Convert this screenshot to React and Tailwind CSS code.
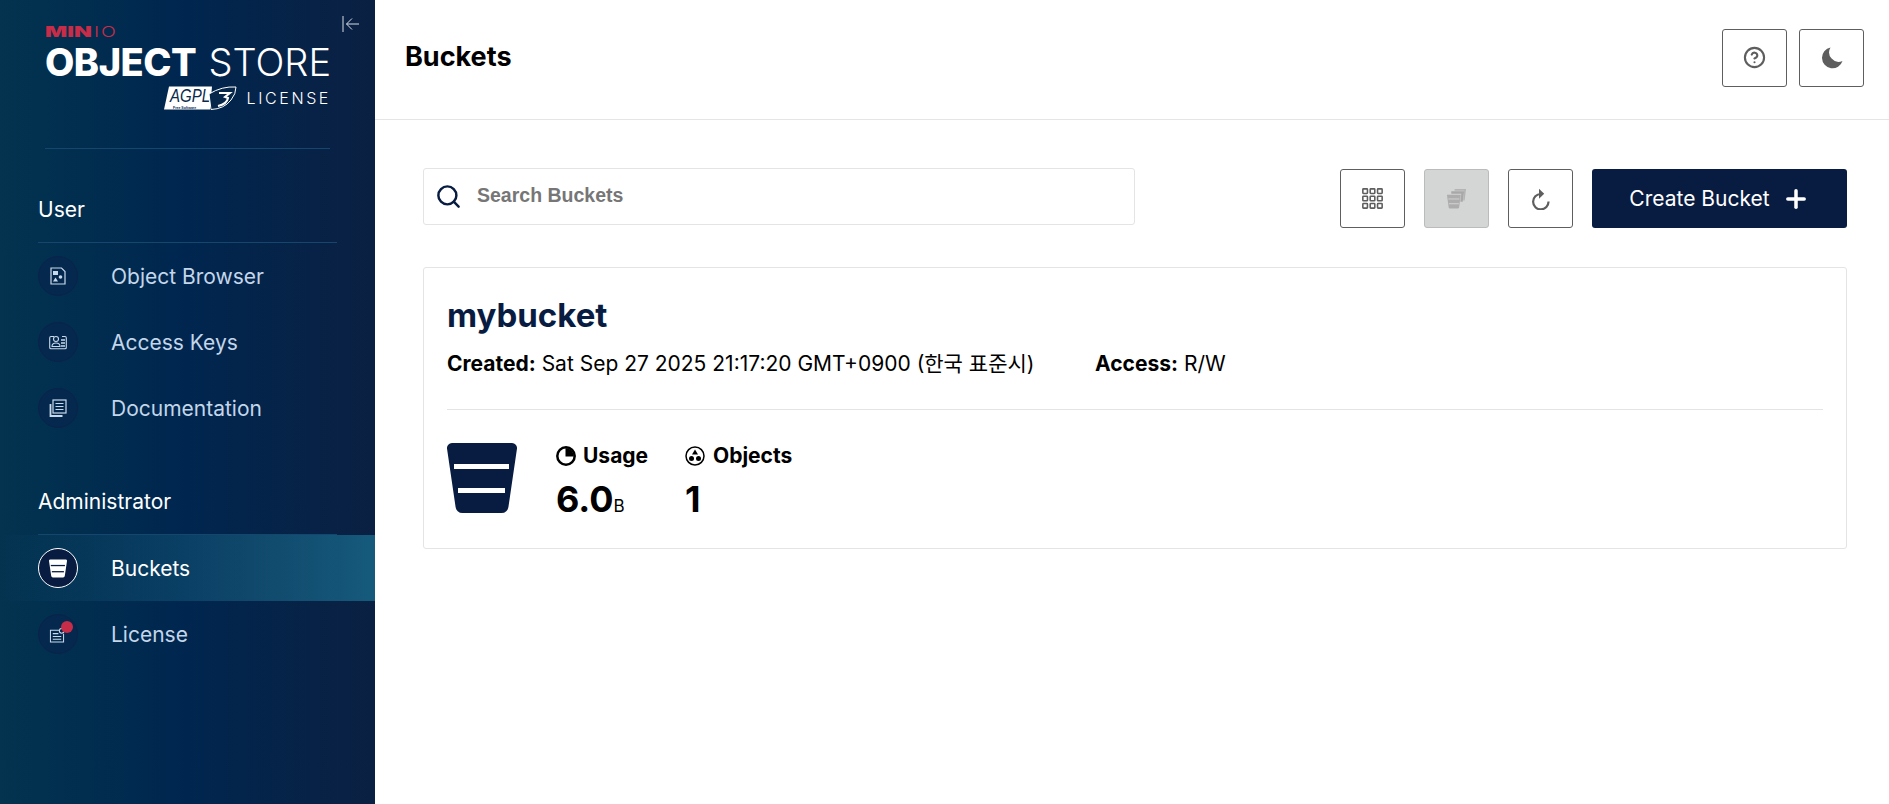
import React from 'react';
import { Search, CircleHelp, Plus } from 'lucide-react';

const BucketShape = ({ className, fill = '#081C42', lines = '#ffffff' }) => (
  <svg viewBox="0 0 70 70" className={className}>
    <path d="M5 0h60a5 5 0 0 1 5 5.500l-8.500 58a7 7 0 0 1-7 6.500h-39a7 7 0 0 1-7-6.500L0 5.500A5 5 0 0 1 5 0z" fill={fill} />
    <rect x="7" y="21" width="55" height="5" fill={lines} />
    <rect x="11" y="45" width="47" height="5" fill={lines} />
  </svg>
);

const ObjectBrowserIcon = () => (
  <svg viewBox="0 0 16 18" className="w-[16px] h-[18px]" fill="none">
    <path d="M1 1h10.500L15 4.500V17H1z" stroke="#c8d9ea" strokeWidth="1.200" />
    <rect x="3" y="4" width="5" height="4" fill="#c8d9ea" />
    <circle cx="10.500" cy="10" r="1.800" fill="#c8d9ea" />
    <path d="M5.500 10.500 8 14.500H3z" fill="#c8d9ea" />
  </svg>
);

const AccessKeysIcon = () => (
  <svg viewBox="0 0 18 15" className="w-[18px] h-[15px]" fill="none" stroke="#c8d9ea" strokeWidth="1.100">
    <path d="M5 1.500H2Q.7 1.500.7 3v9.500q0 1.300 1.300 1.300h14q1.300 0 1.300-1.300V3q0-1.500-1.300-1.500h-3" />
    <circle cx="7" cy="4" r="2.500" />
    <path d="M3 11.500q0-3.500 4-3.500t4 3.500z" />
    <path d="M12 5h4M12 8h4M12 11h4" strokeWidth="1.600" />
  </svg>
);

const DocumentationIcon = () => (
  <svg viewBox="0 0 18 18" className="w-[18px] h-[18px]" fill="none" stroke="#c8d9ea">
    <rect x="4" y="1" width="13" height="13" strokeWidth="1.200" />
    <path d="M6.500 4.500h8M6.500 7.500h8M6.500 10.500h8" strokeWidth="1.200" />
    <path d="M1.500 5v12h12" strokeWidth="1.800" />
  </svg>
);

const LicenseIcon = () => (
  <svg viewBox="0 0 16 16" className="w-[16px] h-[15px] mt-[3px] mr-[3px]" fill="none" stroke="#c8d9ea" strokeWidth="1.100">
    <path d="M11 2.500H1v12.500h14V6" />
    <path d="M3.500 6h6M3.500 9h9M3.500 12h9" strokeWidth="1.200" />
    <circle cx="13" cy="3" r="2.500" />
  </svg>
);

const GridIcon = () => (
  <svg viewBox="0 0 20 20" className="w-[21px] h-[21px]" fill="none" stroke="#5e5e5e" strokeWidth="1.500">
    {[0, 7, 14].map((y) =>
      [0, 7, 14].map((x) => <rect key={`${x}-${y}`} x={x + 0.800} y={y + 0.800} width="4.400" height="4.400" rx="0.600" />)
    )}
  </svg>
);

const MultiBucketIcon = () => (
  <svg viewBox="0 0 22 22" className="w-[21px] h-[21px]">
    <path d="M9 1h12l-1.500 12H18L19 3H9z" fill="#b4b4b4" />
    <path d="M5.500 3.500H19l-1.500 11H15l1-8.500H5.500z" fill="#a8a8a8" />
    <path d="M1 7h14.500l-1.800 13.500q-.2 1-1.200 1H4q-1 0-1.200-1z" fill="#adadad" />
    <path d="M2.500 11.500h11.500M3 16.500h10.500" stroke="#d4d5d5" strokeWidth="1" />
  </svg>
);

const RefreshIcon = () => (
  <svg viewBox="0 0 20 22" className="w-[20px] h-[22px]" fill="none" stroke="#5e5e5e">
    <path d="M17.500 13.500A7.700 7.700 0 1 1 9.800 6" strokeWidth="2.200" />
    <path d="M8 .8 13.200 5.800 8 10.800z" fill="#5e5e5e" stroke="none" />
  </svg>
);

const MoonIcon = () => (
  <svg viewBox="0 0 22 22" className="w-[22px] h-[22px]">
    <path d="M9.500.5a10.500 10.500 0 1 0 12 13.500A9.500 9.500 0 0 1 9.500.5z" fill="#5e5e5e" />
  </svg>
);

const UsageIcon = () => (
  <svg viewBox="0 0 20 20" className="w-[20px] h-[20px]" fill="none">
    <circle cx="10" cy="10" r="8.700" stroke="#000" strokeWidth="2.500" />
    <path d="M9.500 2v8.500H18a8.500 8.500 0 0 0-8.500-8.500z" fill="#000" />
  </svg>
);

const ObjectsIcon = () => (
  <svg viewBox="0 0 20 20" className="w-[20px] h-[20px]" fill="none">
    <circle cx="10" cy="10" r="9" stroke="#000" strokeWidth="1.500" />
    <path d="M10 3.500 13 8.500H7z" fill="#000" />
    <circle cx="6.500" cy="12.500" r="2.500" fill="#000" />
    <circle cx="13.500" cy="12.500" r="2.500" fill="#000" />
  </svg>
);

const Logo = () => (
  <div className="flex flex-col w-[286px]">
    <div className="flex items-center h-[12px] text-[15px] leading-none text-[#C72C48] whitespace-nowrap">
      <span className="inline-block w-[49px] font-black origin-left scale-x-[1.550]">MIN</span>
      <span className="inline-block font-light origin-left scale-x-[1.300] tracking-[1.500px]">IO</span>
    </div>
    <div className="mt-[11px] h-[28px] flex items-center justify-between text-white text-[38px] leading-none whitespace-nowrap">
      <span className="font-extrabold tracking-[-0.500px]">OBJECT</span>
      <span className="font-light">STORE</span>
    </div>
    <div className="mt-[10px] h-[24px] flex items-center justify-between pl-[119px]">
      <svg viewBox="0 0 73 24" className="w-[73px] h-[24px]">
        <path d="M5 .5h43l-2 23H0z" fill="#fff" />
        <text x="6" y="16" fontFamily="Liberation Sans, sans-serif" fontStyle="italic" fontWeight="400" fontSize="18" fill="#0a2a4c" textLength="40" lengthAdjust="spacingAndGlyphs">AGPL</text>
        <text x="9" y="22.500" fontFamily="Liberation Sans, sans-serif" fontWeight="700" fontSize="3.500" fill="#0a2a4c">Free Software</text>
        <path d="M45 8 47 23.500Q60 23 67 14 72 8 72 1 58 0 45 8z" fill="#06274a" stroke="#fff" strokeWidth="1" />
        <path d="M55 7h11l-5 4 3 1q-1 6-10 8" fill="none" stroke="#fff" strokeWidth="2" />
      </svg>
      <span className="text-white text-[16px] leading-none tracking-[2.600px] font-light">LICENSE</span>
    </div>
  </div>
);

const NavItem = ({ label, icon, active, badge }) => (
  <div
    className={`flex items-center h-[66px] pl-[38px] ${
      active ? 'bg-gradient-to-r from-transparent to-[#155a7c] text-white' : 'text-[#c3d6ea]'
    }`}
  >
    <div
      className={`relative flex items-center justify-center w-[40px] h-[40px] rounded-full border ${
        active ? 'bg-[#081C42] border-white' : 'bg-[#05284e] border-[#0a234a]'
      }`}
    >
      {icon}
      {badge && <span className="absolute top-[6px] right-[4px] w-[12px] h-[12px] rounded-full bg-[#C72C48]" />}
    </div>
    <span className="ml-[33px] text-[21px] leading-none">{label}</span>
  </div>
);

const SectionTitle = ({ children }) => (
  <div className="mx-[38px] h-[58px] pb-[8px] flex items-center border-b border-[#14466e] text-white text-[21px]">
    {children}
  </div>
);

const IconButton = ({ children, className }) => (
  <button className={`flex items-center justify-center rounded-[3px] border ${className}`}>{children}</button>
);

export default function App() {
  return (
    <div className="flex h-screen bg-white text-black overflow-hidden [font-family:Inter,'Noto_Sans_CJK_KR',sans-serif]">
      <aside className="relative flex flex-col w-[375px] shrink-0 bg-gradient-to-r from-[#03334f] via-[#00264f] to-[#0a2042]">
        <button className="absolute top-[15px] right-[15px] text-[#d5dde6]">
          <svg viewBox="0 0 18 18" className="w-[18px] h-[18px]" fill="none" stroke="currentColor" strokeWidth="1">
            <path d="M1 1v16M17 9H4.500M10 3.500 4.500 9l5.500 5.500" />
          </svg>
        </button>
        <div className="mx-[45px] pt-[25px] h-[149px] border-b border-[#14466e]">
          <Logo />
        </div>
        <div className="pt-[36px]">
          <SectionTitle>User</SectionTitle>
          <NavItem label="Object Browser" icon={<ObjectBrowserIcon />} />
          <NavItem label="Access Keys" icon={<AccessKeysIcon />} />
          <NavItem label="Documentation" icon={<DocumentationIcon />} />
        </div>
        <div className="pt-[36px]">
          <SectionTitle>Administrator</SectionTitle>
          <NavItem
            active
            label="Buckets"
            icon={<BucketShape className="w-[18px] h-[19px]" fill="#ffffff" lines="#081C42" />}
          />
          <NavItem label="License" icon={<LicenseIcon />} badge />
        </div>
      </aside>

      <main className="flex-1 min-w-0">
        <header className="flex items-center justify-between h-[120px] pl-[30px] pr-[25px] pb-[4px] border-b border-[#e5e5e5]">
          <h1 className="text-[27px] font-bold text-black">Buckets</h1>
          <div className="flex gap-[12px]">
            <IconButton className="w-[65px] h-[58px] border-[#5e5e5e] bg-white">
              <CircleHelp className="w-[23px] h-[23px] text-[#5e5e5e]" strokeWidth={2.200} />
            </IconButton>
            <IconButton className="w-[65px] h-[58px] border-[#5e5e5e] bg-white">
              <MoonIcon />
            </IconButton>
          </div>
        </header>

        <div className="pl-[48px] pr-[42px] pt-[48px]">
          <div className="flex items-start justify-between">
            <div className="flex items-center w-[712px] h-[57px] pl-[11px] pb-[1px] rounded-[3px] border border-[#e4e4e4]">
              <Search className="w-[27px] h-[27px] text-[#081C42]" strokeWidth={2.200} />
              <span className="ml-[15px] text-[19.500px] font-bold text-[#767676] [font-family:'Liberation_Sans',sans-serif]">
                Search Buckets
              </span>
            </div>
            <div className="flex items-center gap-[19px] mt-[1px]">
              <IconButton className="w-[65px] h-[59px] border-[#5e5e5e] bg-white">
                <GridIcon />
              </IconButton>
              <IconButton className="w-[65px] h-[59px] border-[#bbbbbb] bg-[#d4d5d5]">
                <MultiBucketIcon />
              </IconButton>
              <IconButton className="w-[65px] h-[59px] border-[#5e5e5e] bg-white">
                <RefreshIcon />
              </IconButton>
              <button className="flex items-center justify-center w-[255px] h-[59px] rounded-[3px] bg-[#081C42] text-white text-[21px]">
                Create Bucket
                <Plus className="ml-[12px] w-[28px] h-[28px]" strokeWidth={3} />
              </button>
            </div>
          </div>

          <section className="mt-[39px] h-[282px] px-[23px] border border-[#e4e4e4] rounded-[3px]">
            <h2 className="pt-[27px] text-[33px] leading-[40px] font-bold text-[#081C42]">mybucket</h2>
            <div className="flex mt-[17px] text-[21px] leading-[24px]">
              <p className="w-[648px]">
                <b className="font-bold">Created:</b> Sat Sep 27 2025 21:17:20 GMT+0900 (한국 표준시)
              </p>
              <p>
                <b className="font-bold">Access:</b> R/W
              </p>
            </div>
            <hr className="mt-[33px] border-[#e4e4e4]" />
            <div className="flex items-start mt-[33px]">
              <BucketShape className="w-[70px] h-[70px]" />
              <div className="ml-[39px] w-[129px]">
                <div className="flex items-center gap-[7px] pt-[1px] text-[21px] leading-[24px] font-bold">
                  <UsageIcon />
                  Usage
                </div>
                <div className="mt-[11px] leading-[40px] text-[36px] font-bold">
                  6.0<span className="text-[17px] font-normal">B</span>
                </div>
              </div>
              <div>
                <div className="flex items-center gap-[8px] pt-[1px] text-[21px] leading-[24px] font-bold">
                  <ObjectsIcon />
                  Objects
                </div>
                <div className="mt-[11px] leading-[40px] text-[36px] font-bold">1</div>
              </div>
            </div>
          </section>
        </div>
      </main>
    </div>
  );
}
